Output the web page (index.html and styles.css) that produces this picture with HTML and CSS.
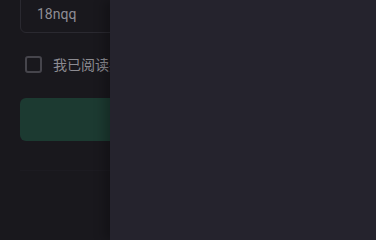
FILE: index.html
```html
<!DOCTYPE html>
<html lang="zh-CN">
<head>
<meta charset="utf-8">
<link rel="stylesheet" href="styles.css">
</head>
<body>
<div class="page">
  <div class="field"><span class="value">18nqq</span></div>
  <label class="agree">
    <span class="box"></span>
    <span class="agree-text">我已阅读并同意用户协议</span>
  </label>
  <div class="submit"></div>
  <div class="divider"></div>
</div>
<div class="drawer"></div>
</body>
</html>
```
FILE: styles.css
```css
html, body {
  margin: 0;
  padding: 0;
  overflow: hidden;
  background: #19181d;
  font-family: "Noto Sans CJK SC", "Noto Sans", sans-serif;
}
body {
  min-height: 100vh;
}
.page {
  display: flex;
  flex-direction: column;
  padding: 0 0 0 20px;
  width: 340px;
}
.field {
  margin-top: -14px;
  height: 37px;
  border: 1px solid #2a2930;
  border-radius: 6px;
  display: flex;
  align-items: flex-end;
  padding: 0 0 8px 16px;
}
.value {
  color: #8f8e95;
  font-family: Roboto, "Noto Sans", sans-serif;
  font-size: 14px;
  line-height: 20px;
}
.agree {
  display: flex;
  align-items: center;
  margin-top: 22px;
  margin-left: 5px;
  height: 18px;
}
.box {
  width: 13px;
  height: 13px;
  border: 2px solid #46454c;
  border-radius: 3px;
  flex: none;
}
.agree-text {
  margin-left: 11px;
  color: #8c8b91;
  font-size: 14px;
  line-height: 18px;
  white-space: nowrap;
}
.submit {
  margin-top: 25px;
  height: 43px;
  border-radius: 6px;
  background: #1c3a31;
}
.divider {
  margin-top: 29px;
  height: 1px;
  background: #1c1b21;
}
.drawer {
  position: fixed;
  top: 0;
  bottom: 0;
  left: 110px;
  right: 0;
  background: #25232d;
  box-shadow: -6px 0 10px rgba(0, 0, 0, 0.25);
}
```
